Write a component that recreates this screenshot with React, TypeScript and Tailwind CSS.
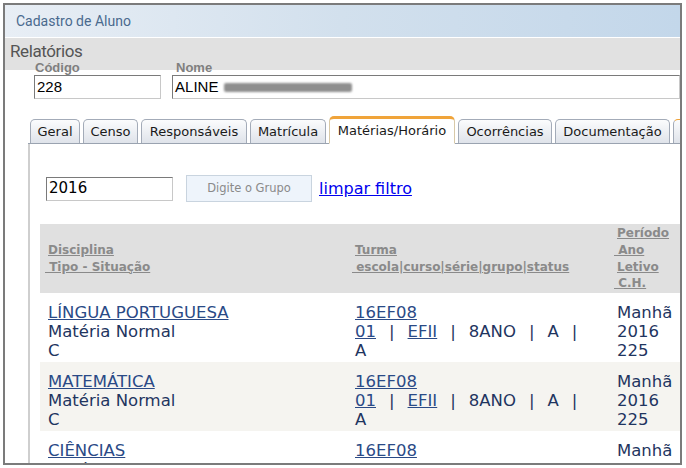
import React from 'react';

const verdana = { fontFamily: '"DejaVu Sans", Verdana, sans-serif' };
const arial = { fontFamily: '"Liberation Sans", Arial, sans-serif' };

const tabs = [
  { label: 'Geral', w: 'w-[50px]' },
  { label: 'Censo', w: 'w-[55px]' },
  { label: 'Responsáveis', w: 'w-[106px]' },
  { label: 'Matrícula', w: 'w-[76px]' },
  { label: 'Matérias/Horário', w: 'w-[126px]', active: true },
  { label: 'Ocorrências', w: 'w-[94px]' },
  { label: 'Documentação', w: 'w-[115px]' },
  { label: 'Frequência', w: 'w-[100px]', hot: true },
];

const rows = [
  { name: 'LÍNGUA PORTUGUESA', bg: 'bg-white' },
  { name: 'MATEMÁTICA', bg: 'bg-[#f5f4f0]' },
  { name: 'CIÊNCIAS', bg: 'bg-white' },
];

function Row({ name, bg }: { name: string; bg: string }) {
  return (
    <div className={`grid grid-cols-[307px_262px_90px] ${bg} text-[16.5px] leading-[19px] text-[#1f3560]`}>
      <div className="pl-[8px] pt-[10px] pb-[2px]">
        <a className="underline text-[#2a4a86]">{name}</a>
        <div>Matéria Normal</div>
        <div>C</div>
      </div>
      <div className="pl-[8px] pt-[10px] pb-[2px]">
        <a className="underline text-[#2a4a86]">16EF08</a>
        <div className="flex gap-[13px]">
          <a className="underline text-[#2a4a86]">01</a>
          <span>|</span>
          <a className="underline text-[#2a4a86]">EFII</a>
          <span>|</span>
          <span>8ANO</span>
          <span>|</span>
          <span>A</span>
          <span>|</span>
        </div>
        <div>A</div>
      </div>
      <div className="pl-[8px] pt-[10px] pb-[2px]">
        <div>Manhã</div>
        <div>2016</div>
        <div>225</div>
      </div>
    </div>
  );
}

export default function App() {
  return (
    <div className="w-[686px] h-[468px] bg-white p-[3px]">
      <div className="w-[679px] h-[462px] border-2 border-[#7b7b7b] overflow-hidden flex flex-col">
        {/* title bar */}
        <div
          className="h-[32px] shrink-0 flex items-center pl-[11px] bg-gradient-to-r from-[#e8eef5] via-[#d2e0ed] to-[#c3d7ea] text-[14px] text-[#4a6a8e]"
          style={{ fontFamily: 'Roboto, Arial, sans-serif' }}
        >
          Cadastro de Aluno
        </div>
        <div className="h-[1px] shrink-0 bg-white" />
        <div
          className="h-[32px] shrink-0 bg-[#e1e1e1] pl-[5px] pt-[4px] text-[17px] leading-[18px] text-[#555] tracking-[-0.4px]"
          style={{ fontFamily: 'Roboto, Arial, sans-serif' }}
        >
          Relatórios
        </div>
        <div className="shrink-0" style={arial}>
          <div className="flex mt-[-9px] pl-[29px] text-[13px] leading-[13px] font-bold text-[#7f7f7f]">
            <div className="w-[141px] pl-[1px]">Código</div>
            <div className="pl-[1px]">Nome</div>
          </div>
          <div className="flex mt-[1px] pl-[29px] gap-[11px]">
            <div className="w-[130px] h-[24px] border border-[#7a7a7a] border-r-[#c8c8c8] border-b-[#c8c8c8] flex items-center pl-[2px] text-[15px] text-black">
              228
            </div>
            <div className="w-[520px] h-[24px] border border-[#7a7a7a] border-r-[#c8c8c8] border-b-[#c8c8c8] flex items-center pl-[2px] text-[15px] text-black">
              ALINE
              <span className="ml-[6px] inline-block w-[128px] h-[9px] bg-[#8f8f8f] rounded-[2px] blur-[1px]" />
            </div>
          </div>
        </div>

        {/* tabs */}
        <div className="ml-[23px] mt-[18px] shrink-0 flex items-end gap-[3px] pl-[2px] border-b border-[#9aa3b0] h-[27px]" style={verdana}>
          {tabs.map((t) =>
            t.active ? (
              <div
                key={t.label}
                className={`${t.w} shrink-0 h-[28px] mb-[-1px] bg-white border border-[#d8c9a8] border-b-white border-t-[3px] border-t-[#f0a43a] rounded-t-[5px] flex items-center justify-center text-[13px] text-[#1a1a1a]`}
              >
                {t.label}
              </div>
            ) : (
              <div
                key={t.label}
                className={`${t.w} shrink-0 h-[24px] bg-gradient-to-b from-[#fbfcfd] to-[#dfe3ea] border border-[#a3abb8] border-b-0 rounded-t-[5px] flex items-center justify-center text-[13px] text-[#1a1a1a] ${t.hot ? 'border-t-[#f0a43a]' : ''}`}
              >
                {t.label}
              </div>
            )
          )}
        </div>

        {/* panel */}
        <div className="ml-[23px] flex-1 border-l-2 border-[#cfcfcf] bg-white" style={verdana}>
          <div className="flex items-center mt-[31px] pl-[16px]">
            <div className="w-[127px] h-[24px] border border-[#7a7a7a] border-r-[#c8c8c8] border-b-[#c8c8c8] flex items-center pl-[2px] text-[15px] text-black">
              2016
            </div>
            <div className="ml-[13px] w-[126px] h-[27px] bg-[#eef4fb] border border-[#c9d4df] flex items-center justify-center text-[11.5px] text-[#8a8a8a]">
              Digite o Grupo
            </div>
            <a className="ml-[7px] text-[16px] text-[#0000ee] underline">limpar filtro</a>
          </div>

          <div className="ml-[10px] mt-[22px] w-[659px]">
            <div className="grid grid-cols-[307px_262px_90px] h-[69px] bg-[#e0e0e0] text-[12px] leading-[16.6px] font-bold text-[#8a8a8a]">
              <div className="pl-[8px] flex flex-col justify-center whitespace-pre">
                <span className="underline">Disciplina</span>
                <span className="underline -ml-[3px]"> Tipo - Situação</span>
              </div>
              <div className="pl-[8px] flex flex-col justify-center whitespace-pre">
                <span className="underline">Turma</span>
                <span className="underline -ml-[3px]"> escola|curso|série|grupo|status</span>
              </div>
              <div className="pl-[8px] flex flex-col justify-center whitespace-pre">
                <span className="underline">Período</span>
                <span className="underline -ml-[3px]"> Ano</span>
                <span className="underline">Letivo</span>
                <span className="underline -ml-[3px]"> C.H.</span>
              </div>
            </div>
            {rows.map((r) => (
              <Row key={r.name} name={r.name} bg={r.bg} />
            ))}
          </div>
        </div>
      </div>
    </div>
  );
}
